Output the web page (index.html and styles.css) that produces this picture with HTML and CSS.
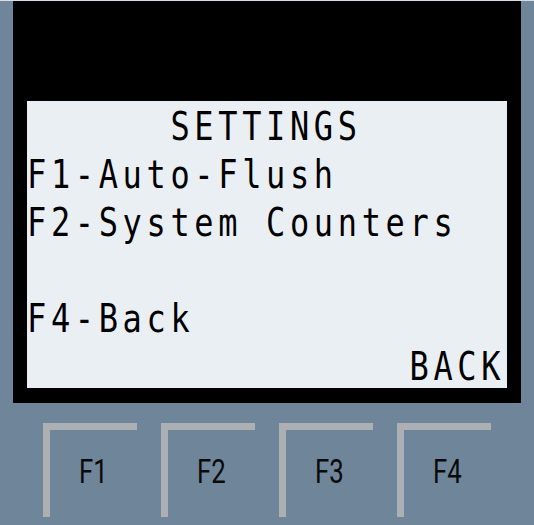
FILE: index.html
```html
<!DOCTYPE html>
<html>
<head>
<meta charset="utf-8">
<link rel="stylesheet" href="styles.css">
</head>
<body>
<div class="device">
  <div class="bezel">
    <div class="lcd">
      <div class="text">
        <div class="row">      SETTINGS</div>
        <div class="row">F1-Auto-Flush</div>
        <div class="row">F2-System Counters</div>
        <div class="row"> </div>
        <div class="row">F4-Back</div>
        <div class="row">                BACK</div>
      </div>
    </div>
  </div>
  <div class="keys">
    <div class="key"><span class="label">F1</span></div>
    <div class="key"><span class="label">F2</span></div>
    <div class="key"><span class="label">F3</span></div>
    <div class="key"><span class="label">F4</span></div>
  </div>
</div>
</body>
</html>
```
FILE: styles.css
```css
html, body {
  margin: 0;
  padding: 0;
  background: #6f8599;
}
.device {
  width: 534px;
  height: 525px;
  border-top: 1px solid #d9dee3;
  box-sizing: border-box;
}
.bezel {
  margin-left: 13px;
  width: 508px;
  height: 402px;
  background: #000;
  padding: 100px 0 0 14px;
  box-sizing: border-box;
}
.lcd {
  width: 480px;
  height: 287px;
  background: #eaeff4;
  padding-top: 2px;
  box-sizing: border-box;
  font-family: "DejaVu Sans Mono", monospace;
  font-size: 32px;
  letter-spacing: 4.64px;
  line-height: 40px;
  color: #000;
}
.text {
  transform: scaleY(1.2);
  transform-origin: 0 0;
}
.row {
  height: 40px;
  white-space: pre;
}
.keys {
  display: flex;
  gap: 24px;
  padding: 20px 0 0 43px;
}
.key {
  width: 94px;
  height: 94px;
  box-sizing: border-box;
  border-top: 7px solid #adb0b2;
  border-left: 7px solid #adb0b2;
  display: flex;
  align-items: center;
  justify-content: center;
  padding-bottom: 4px;
}
.label {
  font-family: Roboto, "Liberation Sans", sans-serif;
  font-size: 33px;
  color: #0a0a0a;
  transform: scaleX(0.78);
  display: inline-block;
}
```
